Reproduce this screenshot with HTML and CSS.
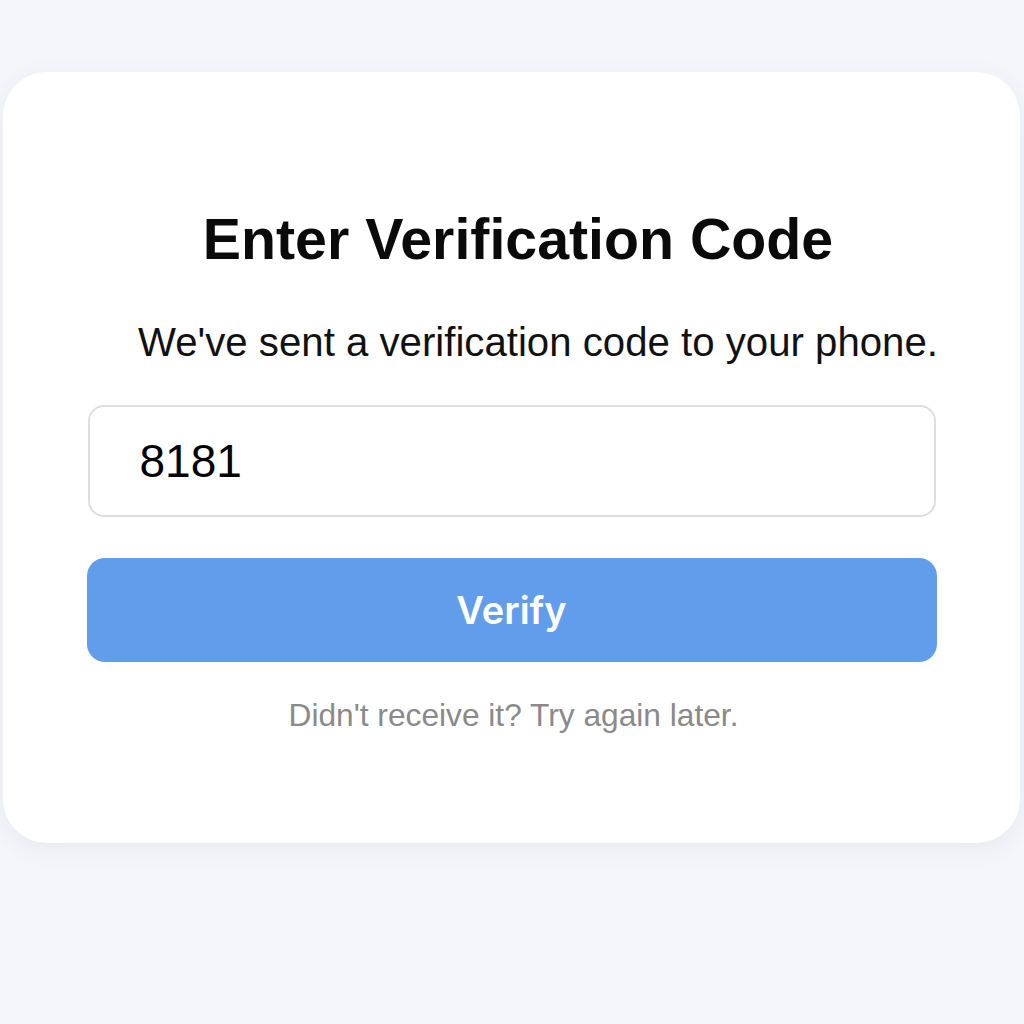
FILE: index.html
```html
<!DOCTYPE html>
<html lang="en">
<head>
<meta charset="utf-8">
<link rel="stylesheet" href="styles.css">
</head>
<body>
<div class="page">
  <div class="card">
    <h1 class="title">Enter Verification Code</h1>
    <p class="subtitle">We've sent a verification code to your phone.</p>
    <div class="input">8181</div>
    <button class="btn">Verify</button>
    <p class="note">Didn't receive it? Try again later.</p>
  </div>
</div>
</body>
</html>
```

FILE: styles.css
```css
html, body {
  margin: 0;
  padding: 0;
  background: #f5f6fa;
  font-family: "Liberation Sans", Arial, sans-serif;
}
.page {
  width: 1024px;
  height: 1024px;
  padding: 72px 4px 0 3px;
  box-sizing: border-box;
}
.card {
  background: #ffffff;
  border-radius: 44px;
  height: 771px;
  box-shadow: 0 6px 24px rgba(60, 70, 110, 0.07);
  display: flex;
  flex-direction: column;
  align-items: center;
  box-sizing: border-box;
  padding-top: 137px;
}
.title {
  margin: 0 0 0 13px;
  font-size: 57.3px;
  line-height: 60px;
  font-weight: 700;
  color: #0a0a0a;
}
.subtitle {
  align-self: stretch;
  margin: 49px 0 0 0;
  padding-left: 135px;
  font-size: 40.2px;
  line-height: 50px;
  color: #111;
}
.input {
  margin-top: 37px;
  width: 848px;
  height: 112px;
  box-sizing: border-box;
  border: 2px solid #dedede;
  border-radius: 16px;
  font-size: 46px;
  padding-left: 50px;
  display: flex;
  align-items: center;
  color: #000;
}
.btn {
  margin-top: 41px;
  width: 850px;
  height: 104px;
  border: none;
  border-radius: 18px;
  background: #629deb;
  color: #fff;
  font-family: Inter, "Liberation Sans", sans-serif;
  font-weight: 600;
  font-size: 38px;
  padding: 0;
}
.note {
  margin: 33px 0 0 4px;
  font-size: 31.7px;
  line-height: 40px;
  color: #8a8a8a;
}
```
